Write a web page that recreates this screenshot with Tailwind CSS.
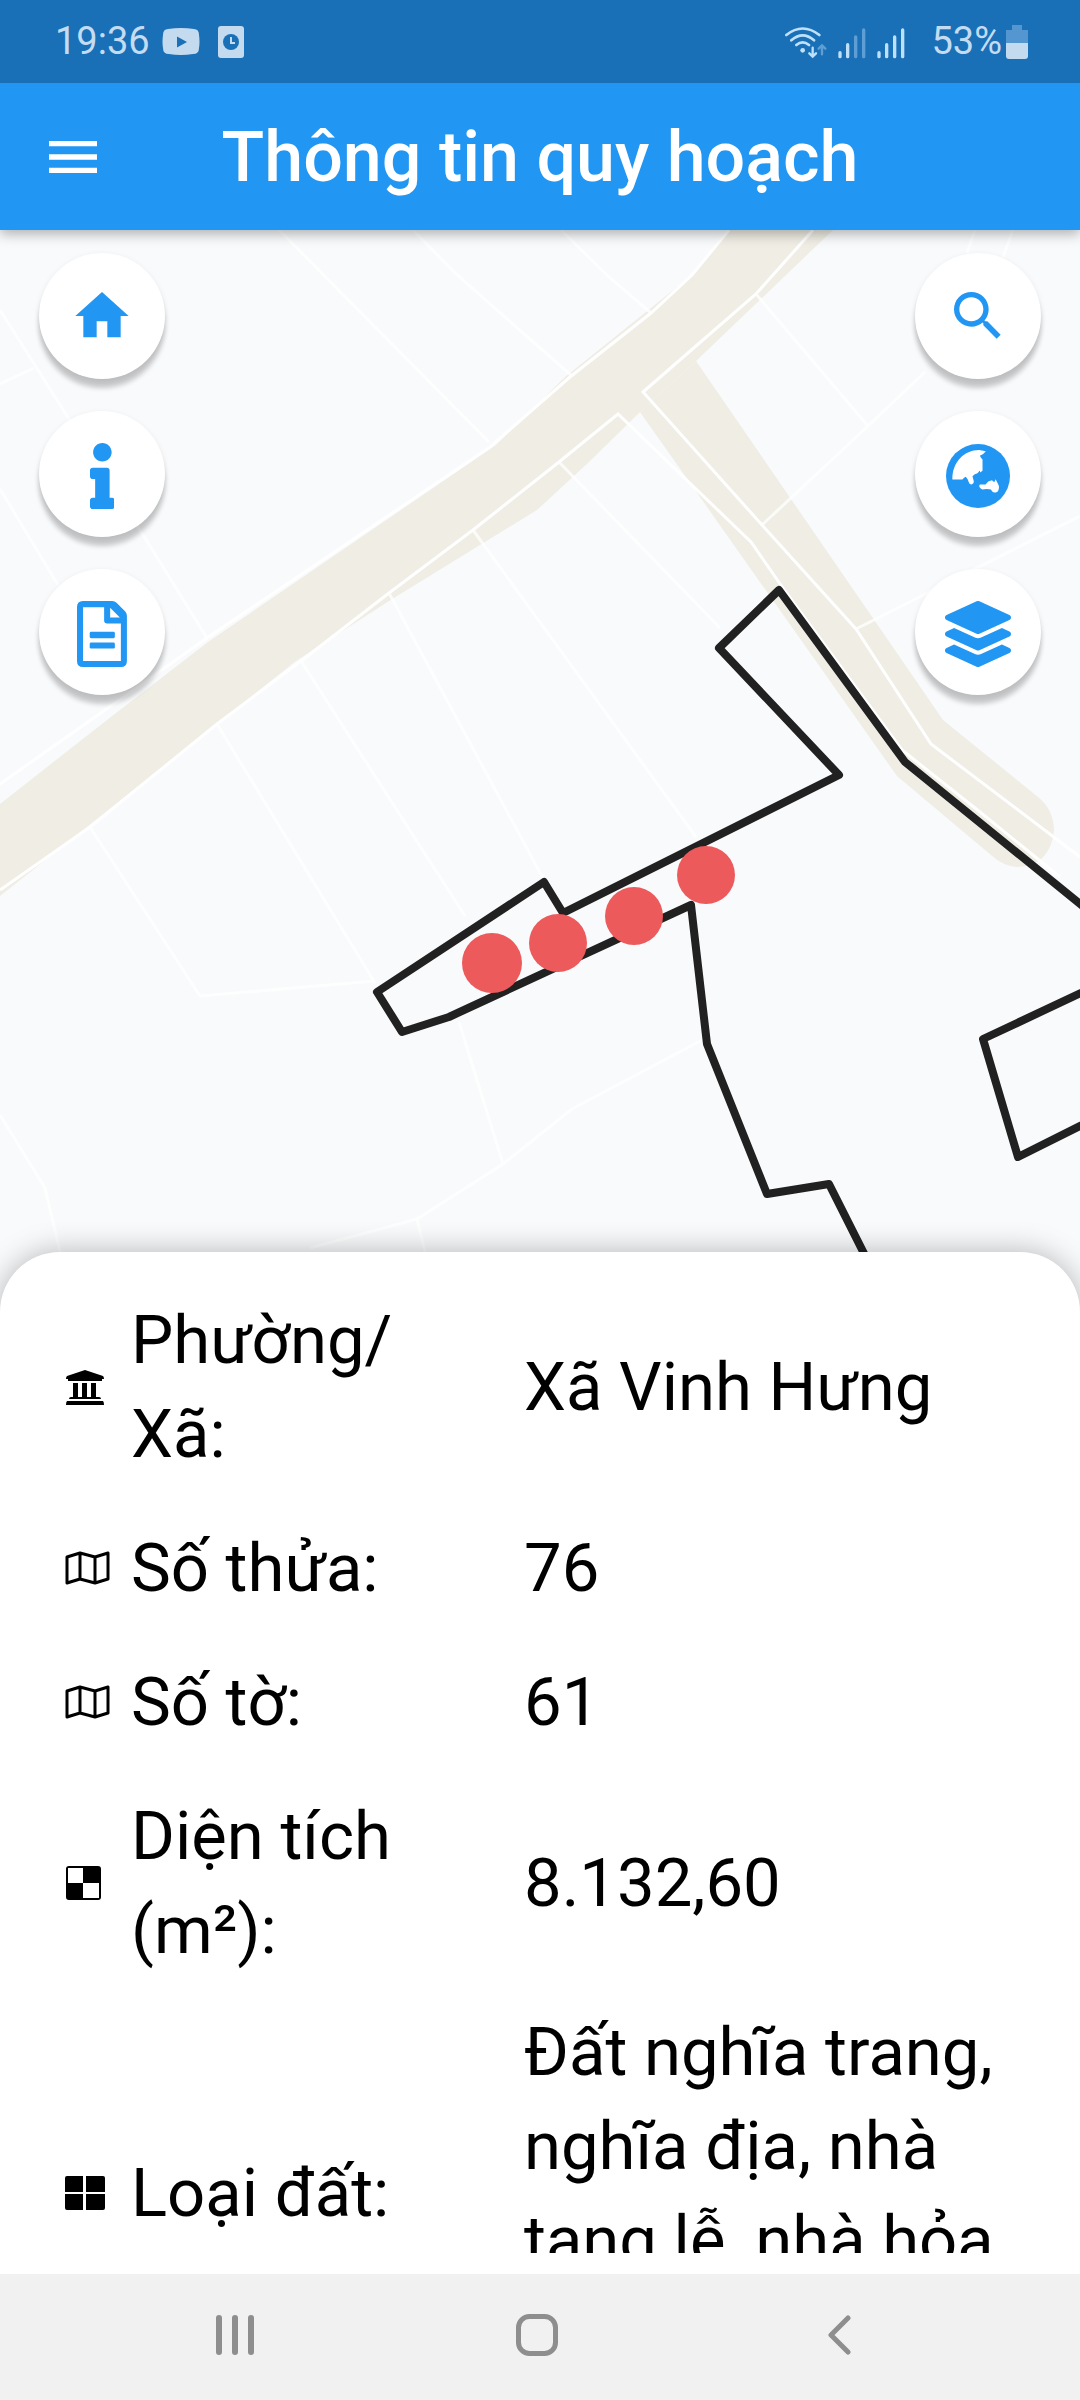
<!DOCTYPE html>
<html lang="vi">
  <head>
    <meta charset="UTF-8" />
    <meta name="viewport" content="width=device-width, initial-scale=1" />
    <title>Thông tin quy hoạch</title>
    <script src="https://cdn.jsdelivr.net/npm/@tailwindcss/browser@4"></script>
    <style>
      body {
        font-family: Roboto, "Noto Sans", sans-serif;
      }
    </style>
  </head>
  <body class="flex h-screen flex-col overflow-hidden bg-white text-black">
    <!-- Status bar -->
    <div class="relative z-20 flex h-[83px] shrink-0 items-center justify-between bg-[#1a70b7] pr-[52px] pl-[55px] text-[38px] text-[#c4dcf1]">
      <div class="flex items-center">
        <span>19:36</span>
        <svg class="ml-3 h-[27px] w-[38px]" viewBox="0 0 38 27" fill="#c4daee">
          <path fill-rule="evenodd" d="M6 1Q19-1 32 1 37 1 37 7 38 14 37 20 37 26 31 26 19 28 7 26 1 26 1 20 0 14 1 7 1 1 6 1zM15 8.500v11l10-5.500z" />
        </svg>
        <svg class="ml-[18px] h-8 w-[26px]" viewBox="0 0 26 32" fill="#c4daee">
          <rect width="26" height="32" rx="3" />
          <circle cx="13" cy="16" r="8" fill="#1a70b7" />
          <path d="M13 11v6h4" fill="none" stroke="#c4daee" stroke-width="2" />
        </svg>
      </div>
      <div class="flex items-center">
        <svg class="h-[34px] w-[123px]" viewBox="38 36 369 102" fill="none" stroke="#bfe0fb" stroke-linecap="round">
          <path stroke-width="8" d="M45 66Q94 27 144 66M60 82Q94 52 128 82M75 96Q94 80 113 96" />
          <circle cx="94" cy="112" r="7" fill="#bfe0fb" stroke="none" />
          <path stroke-width="7" d="M124 104v26m-10-9 10 10 10-10" />
          <path stroke="#5f9ed4" stroke-width="7" d="M152 124V98m-10 9 10-10 10 10" />
          <path stroke-width="10" d="M206 119v12M229 95v36M323 119v12M346 95v36M370 72v59M394 51v80" />
          <path stroke="#5f9ed4" stroke-width="10" d="M253 72v59M277 51v80" />
        </svg>
        <span class="ml-6">53%</span>
        <svg class="ml-1 h-[34px] w-[22px]" viewBox="0 0 22 34" fill="#5496cf">
          <path d="M6 0h10v5h6v14H0V5h6z" />
          <path d="M0 18h22v13q0 3-3 3H3q-3 0-3-3z" fill="#c4daee" />
        </svg>
      </div>
    </div>

    <!-- App bar -->
    <header class="relative z-10 flex h-[147px] shrink-0 items-center justify-between bg-[#2196f3] px-[41px] text-white shadow-[0_4px_12px_rgba(0,0,0,0.3)]">
      <button type="button" aria-label="Menu">
        <svg class="size-16" viewBox="0 0 24 24" fill="currentColor">
          <path d="M3 18h18v-2H3v2zm0-5h18v-2H3v2zm0-7v2h18V6H3z" />
        </svg>
      </button>
      <h1 class="text-[70px] leading-none font-medium">Thông tin quy hoạch</h1>
      <div class="w-16"></div>
    </header>

    <main class="relative flex min-h-0 flex-1 flex-col overflow-hidden bg-[#f8fafc]">
      <!-- Map -->
      <svg class="absolute inset-0 size-full" viewBox="0 230 1080 2044" preserveAspectRatio="xMidYMin slice" fill="none">
        <!-- roads -->
        <g fill="#efede4">
          <path d="M729 230 692 275 565 377 496 445 360 538 208 642 107 720 0 804V896L296 661 389 601 537 510 590 461 640 412 696 361 833 230z" />
          <path d="M640 412 696 361 943 720 1038 797Q1054 810 1054 831 1050 866 1017 867 1003 866 991 855L897 776z" />
        </g>
        <!-- parcel lines -->
        <g stroke="#fff" stroke-width="3">
          <path d="M813 230 756 294 643 392 762 525 856 629 931 744 1080 857" />
          <path d="M0 890 90 827 217 724 301 661 389 593 473 530 559 462 618 414 751 542 785 591 902 750 980 812 1060 877" />
          <path d="M729 230 692 275 651 313 570 377 490 447 207 638 0 784" />
        </g>
        <g stroke="#fff" stroke-opacity="0.75" stroke-width="3">
          <path d="M279 230 489 442M413 230 455 273 572 376M561 230 610 278 651 313" />
          <path d="M0 310 69 419 145 538 207 638M0 384 34 368M0 489 58 585" />
          <path d="M559 462 720 628M473 530 696 837M389 593 544 880M301 661 465 916M217 724 375 983M90 827 200 996 375 981" />
          <path d="M459 1022 503 1164M702 1040 572 1109 503 1164 417 1219 310 1248M417 1219 427 1260M0 1115 45 1188 62 1260" />
          <path d="M756 294 868 426M762 525 868 426 925 372M975 230 967 253M1013 230 1003 257M856 629 1080 516" />
        </g>
        <!-- planning boundary -->
        <g stroke="#212121" stroke-width="8" stroke-linejoin="round">
          <path d="M1100 920 905 762 779 590 719 648 839 775 563 913 544 882 377 992 402 1032 449 1017 691 905 707 1044 767 1194 829 1184 900 1325" />
          <path d="M1100 984 983 1039 1018 1157 1100 1116" />
        </g>
        <g fill="#ec5a5b">
          <circle cx="492" cy="963" r="30" />
          <circle cx="558" cy="943" r="29" />
          <circle cx="634" cy="916" r="29" />
          <circle cx="706" cy="875" r="29" />
        </g>
      </svg>

      <!-- Map buttons -->
      <div class="relative min-h-0 flex-1">
        <div class="flex justify-between px-[39px] pt-[23px] text-[#2196f3]">
          <div class="flex flex-col gap-8">
            <button type="button" aria-label="Trang chủ" class="grid size-[126px] place-items-center rounded-full bg-white shadow-[0_9px_5px_rgba(0,0,0,0.2),0_2px_6px_rgba(0,0,0,0.08)]">
              <svg class="size-16" viewBox="0 0 24 24" fill="currentColor">
                <path d="M10 20v-6h4v6h5v-8h3L12 3 2 12h3v8z" />
              </svg>
            </button>
            <button type="button" aria-label="Thông tin" class="grid size-[126px] place-items-center rounded-full bg-white pt-1 shadow-[0_9px_5px_rgba(0,0,0,0.2),0_2px_6px_rgba(0,0,0,0.08)]">
              <svg class="h-[66px]" viewBox="0 0 192 512" fill="currentColor">
                <path d="M20 424.229h20V279.771H20c-11.046 0-20-8.954-20-20V212c0-11.046 8.954-20 20-20h112c11.046 0 20 8.954 20 20v212.229h20c11.046 0 20 8.954 20 20V492c0 11.046-8.954 20-20 20H20c-11.046 0-20-8.954-20-20v-47.771c0-11.046 8.954-20 20-20zM96 0C56.235 0 24 32.235 24 72s32.235 72 72 72 72-32.235 72-72S135.764 0 96 0z" />
              </svg>
            </button>
            <button type="button" aria-label="Văn bản" class="grid size-[126px] place-items-center rounded-full bg-white pt-1 shadow-[0_9px_5px_rgba(0,0,0,0.2),0_2px_6px_rgba(0,0,0,0.08)]">
              <svg class="h-[66px]" viewBox="0 0 149 197" fill="currentColor">
                <path fill-rule="evenodd" d="M18 0h87q8 0 13 5l26 26q5 5 5 13v135q0 18-18 18H18Q0 197 0 179V18Q0 0 18 0zM18 19v160h113V67H90q-9 0-9-9V19zM99 20v29h29z" />
                <rect x="38" y="92" width="75" height="19" rx="4" />
                <rect x="38" y="124" width="75" height="18" rx="4" />
              </svg>
            </button>
          </div>
          <div class="flex flex-col gap-8">
            <button type="button" aria-label="Tìm kiếm" class="grid size-[126px] place-items-center rounded-full bg-white shadow-[0_9px_5px_rgba(0,0,0,0.2),0_2px_6px_rgba(0,0,0,0.08)]">
              <svg class="size-16" viewBox="0 0 24 24" fill="currentColor">
                <path d="M15.500 14h-.79l-.28-.27A6.471 6.471 0 0 0 16 9.500 6.500 6.500 0 1 0 9.500 16c1.610 0 3.090-.59 4.230-1.570l.27.28v.79l5 4.990L20.490 19l-4.990-5zm-6 0C7.010 14 5 11.990 5 9.500S7.010 5 9.500 5 14 7.010 14 9.500 11.990 14 9.500 14z" />
              </svg>
            </button>
            <button type="button" aria-label="Bản đồ nền" class="grid size-[126px] place-items-center rounded-full bg-white pt-1 shadow-[0_9px_5px_rgba(0,0,0,0.2),0_2px_6px_rgba(0,0,0,0.08)]">
              <svg class="size-16" viewBox="26 26 191 191" fill="currentColor">
                <circle cx="121.500" cy="121.500" r="95.500" />
                <path fill="#fff" d="M45 131C45 80 80 44 125 44L145 48 137 56 127 61 131 68 135 72V106L128 111 127 105 120 113 112 116 105 122 109 137Q110 145 103 147 95 147 94 140L91 132 85 124 80 127 75 132H45z" />
                <path fill="#fff" d="M127 147 144 147 152 138 163 134 170 140 174 131 179 141 184 151Q185 165 178 169 170 173 164 168L160 162 148 160 134 162Q121 154 127 147z" />
              </svg>
            </button>
            <button type="button" aria-label="Lớp bản đồ" class="grid size-[126px] place-items-center rounded-full bg-white pt-1 shadow-[0_9px_5px_rgba(0,0,0,0.2),0_2px_6px_rgba(0,0,0,0.08)]">
              <svg class="size-[66px]" viewBox="0 0 512 512" fill="currentColor">
                <path d="M12.410 148.020l232.940 105.670c6.800 3.090 14.490 3.090 21.290 0l232.940-105.670c16.550-7.510 16.550-32.520 0-40.030L266.650 2.310a25.607 25.607 0 0 0-21.290 0L12.410 107.980c-16.550 7.510-16.550 32.530 0 40.040zm487.180 88.280l-58.090-26.330-161.640 73.270c-7.560 3.430-15.590 5.170-23.860 5.170s-16.290-1.740-23.860-5.170L70.510 209.970l-58.100 26.330c-16.550 7.500-16.550 32.500 0 40l232.940 105.590c6.800 3.080 14.490 3.080 21.290 0L499.590 276.300c16.550-7.500 16.550-32.500 0-40zm0 127.800l-57.870-26.230-161.860 73.370c-7.560 3.430-15.590 5.170-23.860 5.170s-16.290-1.740-23.860-5.170L70.290 337.870 12.410 364.100c-16.550 7.500-16.550 32.500 0 40l232.940 105.590c6.800 3.080 14.490 3.080 21.290 0L499.590 404.100c16.550-7.500 16.550-32.500 0-40z" />
              </svg>
            </button>
          </div>
        </div>
      </div>

      <!-- Parcel details -->
      <section class="relative flex min-h-0 flex-1 flex-col rounded-t-[60px] bg-white shadow-[0_0_30px_rgba(0,0,0,0.28)]">
        <dl class="mx-16 my-[21px] min-h-0 flex-1 overflow-hidden text-[67px] leading-[94px]">
          <div class="grid grid-cols-[460px_1fr] items-center py-5">
            <dt class="flex items-center">
              <span class="w-[67px] shrink-0">
                <svg class="h-[35px] w-10" viewBox="0 0 40 35">
                  <path d="M21 0 39 6q1 1 1 3h-2v2H4V9H2q0-2 1-3zM9 13h5v14h4V13h5v14h4V13h5v14h3q2 0 2 2H5q0-2 2-2h2zM3 31h36q1 1 1 4H2q0-3 1-4z" />
                </svg>
              </span>
              <span class="pr-16">Phường/<wbr />Xã:</span>
            </dt>
            <dd>Xã Vinh Hưng</dd>
          </div>
          <div class="grid grid-cols-[460px_1fr] items-center py-5">
            <dt class="flex items-center">
              <span class="w-[67px] shrink-0">
                <svg class="h-[34px] w-[46px]" viewBox="0 0 46 34" fill="none" stroke="#000" stroke-width="3" stroke-linejoin="round">
                  <path d="M3 6 16 2 31 6 44 2V28L31 32 16 28 3 32zM16 2v26M31 6v26" />
                </svg>
              </span>
              <span>Số thửa:</span>
            </dt>
            <dd>76</dd>
          </div>
          <div class="grid grid-cols-[460px_1fr] items-center py-5">
            <dt class="flex items-center">
              <span class="w-[67px] shrink-0">
                <svg class="h-[34px] w-[46px]" viewBox="0 0 46 34" fill="none" stroke="#000" stroke-width="3" stroke-linejoin="round">
                  <path d="M3 6 16 2 31 6 44 2V28L31 32 16 28 3 32zM16 2v26M31 6v26" />
                </svg>
              </span>
              <span>Số tờ:</span>
            </dt>
            <dd>61</dd>
          </div>
          <div class="grid grid-cols-[460px_1fr] items-center py-5">
            <dt class="flex items-center">
              <span class="w-[67px] shrink-0">
                <svg class="h-[34px] w-[37px]" viewBox="0 0 37 34">
                  <path fill-rule="evenodd" d="M5 0h29q3 0 3 3v28q0 3-3 3H5q-3 0-3-3V3q0-3 3-3zM4 2v15h15v15h16V17H19V2z" />
                </svg>
              </span>
              <span class="pr-16">Diện tích (m²):</span>
            </dt>
            <dd>8.132,60</dd>
          </div>
          <div class="grid grid-cols-[460px_1fr] items-center py-2">
            <dt class="flex items-center">
              <span class="w-[67px] shrink-0">
                <svg class="h-[34px] w-[41px]" viewBox="0 0 41 34">
                  <path d="M3 0h16v16H1V2q0-2 2-2zM22 0h17q2 0 2 2v14H22zM1 18h18v16H3q-2 0-2-2zM22 18h19v14q0 2-2 2H22z" />
                </svg>
              </span>
              <span>Loại đất:</span>
            </dt>
            <dd>Đất nghĩa trang, nghĩa địa, nhà tang lễ, nhà hỏa táng</dd>
          </div>
        </dl>
      </section>
    </main>

    <!-- System navigation -->
    <nav class="relative z-10 flex h-[126px] shrink-0 items-center bg-[#f1f1f1] pr-[90px] pb-1 pl-[84px]">
      <button type="button" aria-label="Gần đây" class="grid flex-1 place-items-center">
        <svg class="h-[42px] w-10" viewBox="0 0 40 42" fill="none" stroke="#8e8e8e" stroke-width="6" stroke-linecap="round">
          <path d="M4 4v34M20 4v34M36 4v34" />
        </svg>
      </button>
      <button type="button" aria-label="Màn hình chính" class="grid flex-1 place-items-center">
        <svg class="size-[42px]" viewBox="0 0 42 42" fill="none" stroke="#8e8e8e" stroke-width="5">
          <rect x="2.500" y="2.500" width="37" height="37" rx="11" />
        </svg>
      </button>
      <button type="button" aria-label="Quay lại" class="grid flex-1 place-items-center">
        <svg class="h-[42px] w-6" viewBox="0 0 24 42" fill="none" stroke="#8e8e8e" stroke-width="5" stroke-linecap="round" stroke-linejoin="round">
          <path d="M21 4 4 21l17 17" />
        </svg>
      </button>
    </nav>
  </body>
</html>
